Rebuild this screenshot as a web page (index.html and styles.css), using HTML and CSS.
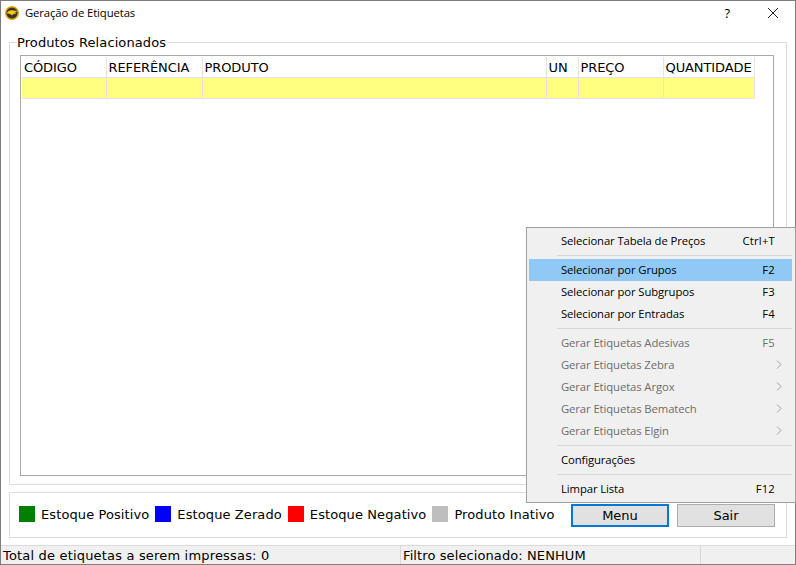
FILE: index.html
```html
<!DOCTYPE html>
<html lang="pt-BR">
<head>
  <meta charset="UTF-8">
  <title>Geração de Etiquetas</title>
  <link rel="stylesheet" href="styles.css">
</head>
<body>
  <div class="window">
    <div class="titlebar">
      <svg class="app-icon" width="14" height="14" viewBox="0 0 14 14">
        <circle cx="7" cy="7" r="6.3" fill="#3b3522" stroke="#e0a90f" stroke-width="1.4"/>
        <path d="M1.5 7.5 C3 4.5 6 3.5 8 4.5 L12.5 5 L10 6.5 L11.5 8 C9 7.5 8 8 7 9.5 C6 8 4 7.5 1.5 7.5Z" fill="#f6c81c"/>
      </svg>
      <span class="title">Geração de Etiquetas</span>
      <span class="help">?</span>
      <svg class="close" width="12" height="12" viewBox="0 0 12 12">
        <path d="M1 1 L11 11 M11 1 L1 11" stroke="#222" stroke-width="1" fill="none"/>
      </svg>
    </div>

    <div class="content">
      <fieldset class="group products">
        <legend>Produtos Relacionados</legend>
        <div class="grid-box">
          <table class="grid">
            <colgroup>
              <col class="c-code"><col class="c-ref"><col class="c-prod"><col class="c-un"><col class="c-price"><col class="c-qty">
            </colgroup>
            <thead>
              <tr><th>CÓDIGO</th><th>REFERÊNCIA</th><th>PRODUTO</th><th>UN</th><th>PREÇO</th><th>QUANTIDADE</th></tr>
            </thead>
            <tbody>
              <tr><td></td><td></td><td></td><td></td><td></td><td></td></tr>
            </tbody>
          </table>
        </div>
      </fieldset>

      <div class="group footer">
        <div class="legend-item"><span class="swatch green"></span>Estoque Positivo</div>
        <div class="legend-item"><span class="swatch blue"></span>Estoque Zerado</div>
        <div class="legend-item"><span class="swatch red"></span>Estoque Negativo</div>
        <div class="legend-item"><span class="swatch gray"></span>Produto Inativo</div>
        <button class="btn btn-active">Menu</button>
        <button class="btn">Sair</button>
      </div>
    </div>

    <div class="statusbar">
      <div class="status s1">Total de etiquetas a serem impressas: 0</div>
      <div class="status s2">Filtro selecionado: NENHUM</div>
      <div class="status s3"></div>
    </div>
  </div>

  <!-- popup menu, sits over the window -->
  <div class="menu">
    <div class="item"><span>Selecionar Tabela de Preços</span><span class="key">Ctrl+T</span></div>
    <div class="sep"></div>
    <div class="item selected"><span>Selecionar por Grupos</span><span class="key">F2</span></div>
    <div class="item"><span>Selecionar por Subgrupos</span><span class="key">F3</span></div>
    <div class="item"><span>Selecionar por Entradas</span><span class="key">F4</span></div>
    <div class="sep"></div>
    <div class="item off"><span>Gerar Etiquetas Adesivas</span><span class="key">F5</span></div>
    <div class="item off"><span>Gerar Etiquetas Zebra</span><svg class="arrow" width="6" height="9" viewBox="0 0 6 9"><path d="M1 .5 L5 4.5 L1 8.5" fill="none" stroke="#a0a0a0"/></svg></div>
    <div class="item off"><span>Gerar Etiquetas Argox</span><svg class="arrow" width="6" height="9" viewBox="0 0 6 9"><path d="M1 .5 L5 4.5 L1 8.5" fill="none" stroke="#a0a0a0"/></svg></div>
    <div class="item off"><span>Gerar Etiquetas Bematech</span><svg class="arrow" width="6" height="9" viewBox="0 0 6 9"><path d="M1 .5 L5 4.5 L1 8.5" fill="none" stroke="#a0a0a0"/></svg></div>
    <div class="item off"><span>Gerar Etiquetas Elgin</span><svg class="arrow" width="6" height="9" viewBox="0 0 6 9"><path d="M1 .5 L5 4.5 L1 8.5" fill="none" stroke="#a0a0a0"/></svg></div>
    <div class="sep"></div>
    <div class="item"><span>Configurações</span></div>
    <div class="sep"></div>
    <div class="item"><span>Limpar Lista</span><span class="key">F12</span></div>
  </div>
</body>
</html>
```

FILE: styles.css
```css
* {
  box-sizing: border-box;
}

html, body {
  height: 100%;
  margin: 0;
}

body {
  background: #fff;
  color: #000;
  font-family: "DejaVu Sans", sans-serif;
  font-size: 13px;
  overflow: hidden;
  position: relative;
}

.window {
  border: 1px solid #7d7d7d;
  display: flex;
  flex-direction: column;
  height: 565px;
  width: 796px;
}

/* title bar */
.titlebar {
  align-items: center;
  display: flex;
  flex: none;
  font-family: "Open Sans", sans-serif;
  font-size: 11.3px;
  height: 24px;
  letter-spacing: -.1px;
  padding-left: 4px;
}

.app-icon {
  flex: none;
}

.title {
  flex: 1;
  margin-left: 6px;
  padding-bottom: 2px;
}

.help {
  font-size: 13px;
  margin-right: 37px;
}

.close {
  margin-right: 16px;
}

/* group boxes */
.content {
  display: flex;
  flex: 1;
  flex-direction: column;
  gap: 7px;
  padding: 9px 8px 7px;
}

.group {
  border: 1px solid #dcdcdc;
  margin: 0;
}

.products {
  flex: 1;
  min-height: 0;
  padding: 5px 12px 7px 10px;
}

.products legend {
  letter-spacing: .1px;
  line-height: 14px;
  margin-left: -3px;
  padding: 2px 1px 0 0;
}

.grid-box {
  border: 1px solid #a9a9a9;
  height: 421px;
  padding: 1px;
}

.grid {
  border-collapse: collapse;
  table-layout: fixed;
  width: 732px;
}

.c-code { width: 84px; }
.c-ref { width: 96px; }
.c-prod { width: 344px; }
.c-un { width: 32px; }
.c-price { width: 85px; }
.c-qty { width: 91px; }

.grid th {
  border-bottom: 1px solid #e4e4e4;
  border-right: 1px solid #e4e4e4;
  font-weight: normal;
  height: 20px;
  letter-spacing: -.1px;
  overflow: hidden;
  padding: 2px 0 0 2px;
  text-align: left;
  white-space: nowrap;
}

.grid td {
  background: #ffff80;
  border-bottom: 1px solid #e4e4e4;
  border-right: 1px solid #e4e4e4;
  height: 21px;
  padding: 0;
}

/* legend and buttons */
.footer {
  align-items: center;
  display: flex;
  flex: none;
  height: 46px;
  padding: 0 11px 2px 9px;
}

.legend-item {
  align-items: center;
  display: flex;
  letter-spacing: .1px;
  margin-right: 6px;
  white-space: nowrap;
}

.swatch {
  height: 16px;
  margin-right: 6px;
  width: 16px;
}

.green { background: #008000; }
.blue { background: #0000ff; }
.red { background: #ff0000; }
.gray { background: #bebebe; }

.btn {
  background: #e1e1e1;
  border: 1px solid #adadad;
  font-family: "DejaVu Sans", sans-serif;
  font-size: 13px;
  height: 23px;
  margin-left: 8px;
  margin-top: 2px;
  padding: 0;
  width: 98px;
}

.btn-active {
  border: 2px solid #0078d7;
  margin-left: auto;
}

/* status bar */
.statusbar {
  background: #f0f0f0;
  border-top: 1px solid #dcdcdc;
  display: flex;
  flex: none;
  height: 19px;
  letter-spacing: .18px;
  line-height: 19px;
}

.status {
  border-right: 1px solid #d7d7d7;
  padding-left: 2px;
  white-space: nowrap;
}

.s1 { width: 400px; }
.s2 { letter-spacing: .1px; width: 300px; }
.s3 { border-right: 0; flex: 1; }

/* popup menu */
.menu {
  background: #f0f0f0;
  border: 1px solid #a0a0a0;
  font-family: "Open Sans", sans-serif;
  font-size: 11.3px;
  left: 526px;
  letter-spacing: -.1px;
  padding: 2px 3px 2px 2px;
  position: absolute;
  top: 227px;
  width: 270px;
}

.item {
  align-items: center;
  display: flex;
  height: 22px;
  justify-content: space-between;
  padding: 0 17px 2px 32px;
  white-space: nowrap;
}

.selected {
  background: #90c8f6;
}

.off {
  color: #6d6d6d;
}

.key {
  letter-spacing: .2px;
}

.arrow {
  margin-right: -7px;
}

.sep {
  background: #d7d7d7;
  height: 1px;
  margin: 3px 0 3px 28px;
}
```
